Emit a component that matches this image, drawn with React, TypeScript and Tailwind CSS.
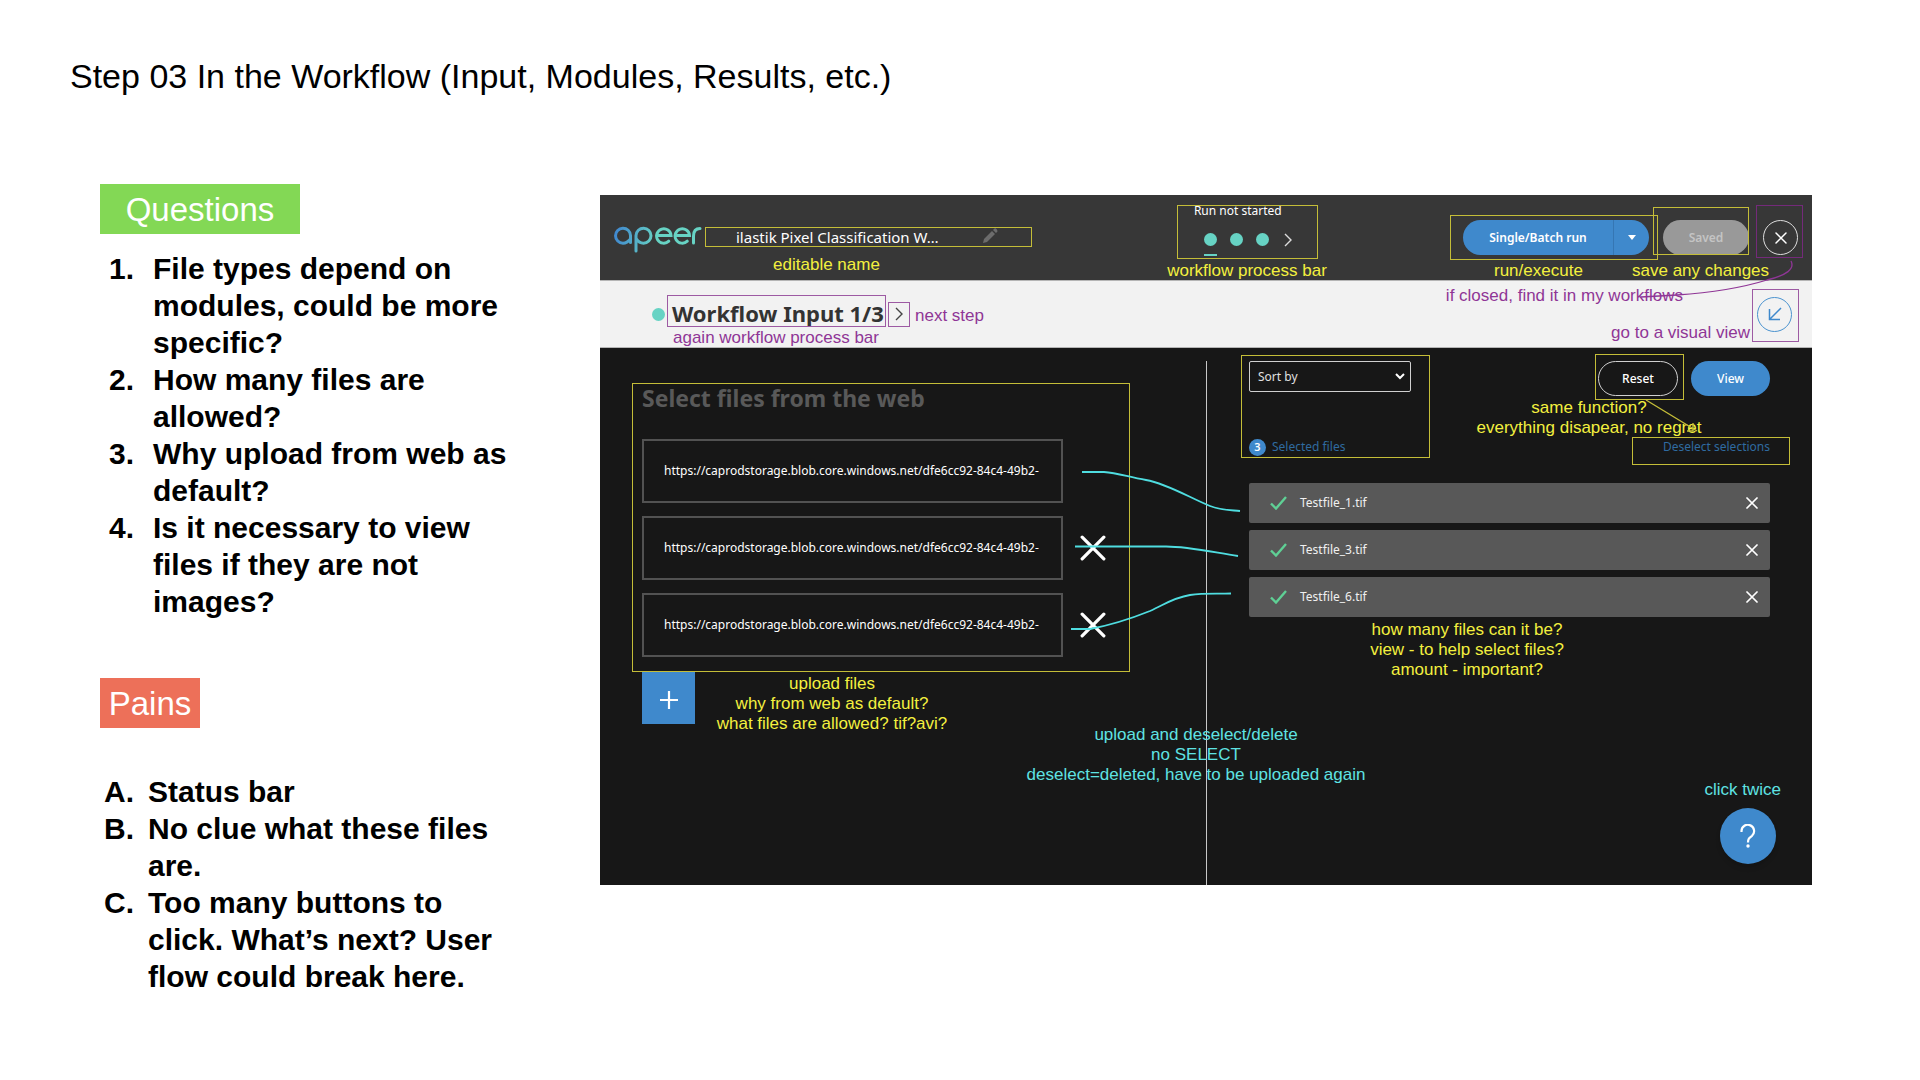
import type { ReactNode } from "react";
import clsx from "clsx";

const fileUrl = "https://caprodstorage.blob.core.windows.net/dfe6cc92-84c4-49b2-";

function Mark({ className }: { className: string }) {
  return <div aria-hidden="true" className={clsx("pointer-events-none absolute border", className)} />;
}

function Note({ className, children }: { className: string; children: ReactNode }) {
  return (
    <p
      className={clsx(
        "pointer-events-none absolute text-center font-['Liberation_Sans',sans-serif] text-[17px] leading-5 whitespace-nowrap",
        className,
      )}
    >
      {children}
    </p>
  );
}

function Cross({ className }: { className: string }) {
  return (
    <svg viewBox="0 0 24 24" className={className} fill="none" stroke="currentColor" strokeLinecap="round">
      <path d="M2 2 22 22M22 2 2 22" />
    </svg>
  );
}

function Chevron() {
  return (
    <svg viewBox="0 0 8 14" className="h-3.5 w-2" fill="none" stroke="currentColor" strokeWidth="1.4">
      <path d="M1 1 7 7 1 13" />
    </svg>
  );
}

function Logo() {
  return (
    <svg viewBox="0 0 88 27" className="mt-1 h-[27px] w-[88px] shrink-0" fill="none" strokeWidth="3" strokeLinecap="round" role="img" aria-label="apeer">
      <defs>
        <linearGradient id="brand" gradientUnits="userSpaceOnUse" x1="0" y1="6" x2="42" y2="14">
          <stop offset="0" stopColor="#3f86cf" />
          <stop offset="1" stopColor="#67d3c4" />
        </linearGradient>
      </defs>
      <g stroke="url(#brand)">
        <path d="M16.500 16.500V9.500A7.500 7.500 0 1 0 9 17.200C12 17.200 14 16 16.500 13" />
        <path d="M22 25V9.500A7.500 7.500 0 1 1 29.500 17.200C26.500 17.200 24 15.500 22.500 13" />
      </g>
      <g stroke="#67d3c4">
        <path d="M42.500 9.500H57A7.200 7.200 0 1 0 54.800 15.200" />
        <path d="M61 9.500H75.500A7.200 7.200 0 1 0 73.300 15.200" />
        <path d="M79.500 17V10Q79.500 2.500 86 2.500" />
      </g>
    </svg>
  );
}

function TopBar() {
  return (
    <header className="flex h-[85px] items-center bg-[#373737] text-white">
      <div className="flex basis-[49%] items-center pl-3.5">
        <Logo />
        <input
          aria-label="Workflow name"
          defaultValue="ilastik Pixel Classification W…"
          className="ml-[34px] w-[232px] bg-transparent pb-0.5 text-[15px] leading-5 outline-none"
        />
        <button aria-label="Edit name" className="ml-3.5 pb-1 text-[#6c6c6c]">
          <svg viewBox="0 0 16 16" className="size-4" fill="currentColor">
            <path d="M1 15 2 11 10 3 13 6 5 14ZM11 2 12.500 .5Q13.500 0 14.500 1T15.500 3.500L14 5Z" />
          </svg>
        </button>
      </div>
      <div className="flex flex-col self-start pt-2">
        <span className="text-[12px] leading-4">Run not started</span>
        <div className="mt-3.5 ml-2.5 flex h-[13px] items-center gap-[13px]">
          <span className="size-[13px] rounded-full bg-[#67d3c4]" />
          <span className="size-[13px] rounded-full bg-[#67d3c4]" />
          <span className="size-[13px] rounded-full bg-[#67d3c4]" />
          <button aria-label="Next stage" className="ml-0.5 text-[#ddd]">
            <Chevron />
          </button>
        </div>
        <span className="mt-2 ml-2.5 h-0.5 w-[13px] bg-[#67d3c4]" />
      </div>
      <div className="ml-auto flex items-center pr-3.5">
        <div className="flex h-[35px] overflow-hidden rounded-full bg-[#3f89cc]">
          <button className="w-[150px] text-[12px] font-semibold">Single/Batch run</button>
          <button aria-label="Run options" className="flex w-9 items-center justify-center border-l border-[#3576b3]">
            <svg viewBox="0 0 8 5" className="h-[5px] w-2" fill="currentColor">
              <path d="M0 0H8L4 5Z" />
            </svg>
          </button>
        </div>
        <button className="ml-3.5 h-[35px] w-[86px] rounded-full bg-[#999] text-[12px] font-semibold text-[#c4c4c4]">Saved</button>
        <button aria-label="Close" className="ml-3.5 flex size-[35px] items-center justify-center rounded-full border border-[#ddd]">
          <Cross className="size-3 stroke-[3]" />
        </button>
      </div>
    </header>
  );
}

function StepBar() {
  return (
    <div className="flex h-[68px] items-center border-y border-[#b5b5b5] bg-[#f2f2f2] pr-5 pl-[52px]">
      <span className="size-[13px] rounded-full bg-[#67d3c4]" />
      <h2 className="ml-[7px] pb-0.5 text-[22px] font-bold whitespace-nowrap text-[#333] lg:w-[223px]">Workflow Input 1/3</h2>
      <button aria-label="Next step" className="text-[#444]">
        <Chevron />
      </button>
      <button aria-label="Visual view" className="ml-auto flex size-[35px] items-center justify-center rounded-full border border-[#4b93cf] text-[#3f89cc]">
        <svg viewBox="0 0 14 14" className="size-3.5" fill="none" stroke="currentColor" strokeWidth="1.5">
          <path d="M13 1 2 12M1.500 2V12.500H12" />
        </svg>
      </button>
    </div>
  );
}

function WebFiles() {
  return (
    <section className="w-1/2 pt-[34px] pl-[42px]">
      <h3 className="text-[23px] leading-8 font-bold text-[#595959]">Select files from the web</h3>
      <ul className="mt-[25px] flex flex-col gap-[13px]">
        {[1, 2, 3].map((n) => (
          <li key={n} className="flex items-center">
            <div className="h-16 w-[421px] border-2 border-[#525252] px-5 pb-0.5">
              <input
                aria-label={`File address ${n}`}
                defaultValue={fileUrl}
                className="h-full w-full bg-transparent text-[12px] text-white outline-none"
              />
            </div>
            {n > 1 && (
              <button aria-label={`Remove address ${n}`} className="ml-[17px] text-white">
                <Cross className="size-[26px] stroke-[3]" />
              </button>
            )}
          </li>
        ))}
      </ul>
      <button aria-label="Add address" className="mt-3.5 flex size-[53px] items-center justify-center bg-[#3f89cc] text-white">
        <svg viewBox="0 0 18 18" className="mt-1 size-[18px]" fill="none" stroke="currentColor" strokeWidth="2.2">
          <path d="M9 0V18M0 9H18" />
        </svg>
      </button>
    </section>
  );
}

function SelectedFiles() {
  return (
    <section className="mt-[13px] w-1/2 border-l border-[#c8c8c8] pr-[42px] pl-[42px]">
      <div className="flex items-start">
        <div className="relative w-[162px]">
          <select aria-label="Sort by" className="h-[31px] w-full appearance-none rounded-xs border border-[#d0d0d0] bg-[#171717] pl-2 text-[12px] text-[#e0e0e0]">
            <option>Sort by</option>
          </select>
          <svg viewBox="0 0 10 7" className="pointer-events-none absolute top-3 right-1.5 h-[7px] w-2.5" fill="none" stroke="#fff" strokeWidth="2">
            <path d="M1 1 5 5 9 1" />
          </svg>
        </div>
        <button className="ml-auto h-[35px] w-20 rounded-full border border-[#d0d0d0] text-[12px] font-medium text-white">Reset</button>
        <button className="ml-[13px] h-[35px] w-[79px] rounded-full bg-[#3f89cc] text-[12px] font-medium text-white">View</button>
      </div>
      <div className="mt-[41px] flex items-center text-[12px] leading-5 text-[#2f6ba0]">
        <span className="flex size-[17px] items-center justify-center rounded-full bg-[#3f89cc] text-[11px] font-semibold text-white">3</span>
        <span className="ml-1.5">Selected files</span>
        <button className="ml-auto">Deselect selections</button>
      </div>
      <ul className="mt-[26px] flex flex-col gap-[7px]">
        {["Testfile_1.tif", "Testfile_3.tif", "Testfile_6.tif"].map((name) => (
          <li key={name} className="flex h-10 items-center rounded-xs bg-[#585858] pr-3 pl-[21px] text-[12px] text-[#f0f0f0]">
            <svg viewBox="0 0 17 14" className="h-3.5 w-[17px]" fill="none" stroke="#5fd095" strokeWidth="2.4">
              <path d="M1 7.500 6 12.500 16 1" />
            </svg>
            <span className="ml-[13px]">{name}</span>
            <button aria-label={`Remove ${name}`} className="ml-auto text-white">
              <Cross className="size-3 stroke-[3.500]" />
            </button>
          </li>
        ))}
      </ul>
    </section>
  );
}

function Annotations() {
  const yellow = "text-[#f3f03f]";
  const purple = "text-[#8f3696]";
  const cyan = "text-[#5fe3e3]";
  return (
    <>
      <Mark className="top-8 left-[105px] h-5 w-[327px] border-[#c4bd38]" />
      <Note className={clsx("top-[60px] left-[105px] w-[243px]", yellow)}>editable name</Note>
      <Mark className="top-[10px] left-[calc(50%-29px)] h-[54px] w-[141px] border-[#c4bd38]" />
      <Note className={clsx("top-[66px] left-[calc(50%-39px)] w-[160px]", yellow)}>workflow process bar</Note>
      <Mark className="top-5 right-[154px] h-[45px] w-[208px] border-[#c4bd38]" />
      <Note className={clsx("top-[66px] right-[230px] w-[88px]", yellow)}>run/execute</Note>
      <Mark className="top-3 right-[63px] h-12 w-24 border-[#c4bd38]" />
      <Note className={clsx("top-[66px] right-11 w-[136px]", yellow)}>save any changes</Note>
      <Mark className="top-2.5 right-[9px] h-[53px] w-[47px] border-[#742a7a]" />

      <Mark className="top-[100px] left-[67px] h-8 w-[219px] border-[#9d5aa3]" />
      <Note className={clsx("top-[133px] left-[72px] w-[208px]", purple)}>again workflow process bar</Note>
      <Mark className="top-[107px] left-[288px] h-[25px] w-[22px] border-[#9d5aa3]" />
      <Note className={clsx("top-[111px] left-[315px]", purple)}>next step</Note>
      <Note className={clsx("top-[91px] right-[129px]", purple)}>if closed, find it in my workflows</Note>
      <Note className={clsx("top-[128px] right-[62px]", purple)}>go to a visual view</Note>
      <Mark className="top-[94px] right-[13px] h-[53px] w-[47px] border-[#9d5aa3]" />
      <svg viewBox="0 0 160 40" className="pointer-events-none absolute top-[65px] right-[15px] h-10 w-40" fill="none" stroke="#8f3696" strokeWidth="1.3">
        <path d="M154 1C158 9 150 15 130 20C104 28 70 33 40 35L4 37" />
      </svg>

      <Mark className="top-[188px] left-8 h-[289px] w-[498px] border-[#c4bd38]" />
      <Note className={clsx("top-[479px] left-[112px] w-[240px]", yellow)}>
        upload files
        <br />
        why from web as default?
        <br />
        what files are allowed? tif?avi?
      </Note>
      <svg viewBox="0 0 180 170" className="pointer-events-none absolute top-[270px] left-[calc(50%-140px)] h-[170px] w-[180px]" fill="none" stroke="#4fdde0" strokeWidth="1.8">
        <path d="M16 7H38C52 8 62 12 80 15C102 19 124 33 144 41C154 45 164 45 174 46" />
        <path d="M9 81.500H100C122 81.500 146 87 172 91" />
        <path d="M5 164H24C40 161 64 154 84 146C98 140 106 133 124 130C138 128 150 129 165 128.500" />
      </svg>
      <Note className={clsx("top-[530px] left-[calc(50%-10px)] -translate-x-1/2", cyan)}>
        upload and deselect/delete
        <br />
        no SELECT
        <br />
        deselect=deleted, have to be uploaded again
      </Note>

      <Mark className="top-40 right-[382px] h-[103px] w-[189px] border-[#c4bd38]" />
      <Mark className="top-[159px] right-32 h-[46px] w-[89px] border-[#c4bd38]" />
      <Note className={clsx("top-[203px] right-[109px] w-[228px]", yellow)}>
        same function?
        <br />
        everything disapear, no regret
      </Note>
      <svg viewBox="0 0 54 34" className="pointer-events-none absolute top-[204px] right-[113px] h-[34px] w-[54px]" fill="none" stroke="#c4bd38" strokeWidth="1.4">
        <path d="M1 1 52 32M48 24V32H42" />
      </svg>
      <Mark className="top-[242px] right-[22px] h-7 w-[158px] border-[#c4bd38]" />
      <Note className={clsx("top-[425px] right-[245px] w-[200px]", yellow)}>
        how many files can it be?
        <br />
        view - to help select files?
        <br />
        amount - important?
      </Note>
      <Note className={clsx("right-[31px] bottom-[85px]", cyan)}>click twice</Note>
    </>
  );
}

function HelpButton() {
  return (
    <button aria-label="Help" className="absolute right-9 bottom-[21px] flex size-14 items-center justify-center rounded-full bg-[#3f89cc] text-white shadow-md">
      <svg viewBox="0 0 16 24" className="h-6 w-4" fill="none" stroke="currentColor" strokeWidth="2.2">
        <path d="M1.500 8V7A6.300 6.300 0 1 1 12 11.800C9 14 8 15 8 18.500" />
        <circle cx="8" cy="22" r="1.700" fill="currentColor" stroke="none" />
      </svg>
    </button>
  );
}

function Workflow() {
  return (
    <article className="relative mt-[11px] min-w-0 flex-1 bg-[#171717] font-['Noto_Sans',sans-serif]">
      <TopBar />
      <StepBar />
      <div className="flex min-h-[537px]">
        <WebFiles />
        <SelectedFiles />
      </div>
      <HelpButton />
      <Annotations />
    </article>
  );
}

const questions = [
  "File types depend on modules, could be more specific?",
  "How many files are allowed?",
  "Why upload from web as default?",
  "Is it necessary to view files if they are not images?",
];

const pains = [
  "Status bar",
  "No clue what these files are.",
  "Too many buttons to click. What’s next? User flow could break here.",
];

export default function App() {
  return (
    <main className="min-h-screen bg-white pb-10 font-['Liberation_Sans',sans-serif] text-black">
      <h1 className="pt-14 pl-[70px] text-[34px] leading-10">Step 03 In the Workflow (Input, Modules, Results, etc.)</h1>
      <div className="mt-22 flex items-start gap-20 pr-27 pl-25">
        <aside className="w-[420px] shrink-0">
          <h2 className="flex h-[50px] w-[200px] items-center justify-center bg-[#83d855] pt-0.5 text-[33px] text-white">Questions</h2>
          <ol className="mt-4 pr-2 pl-[9px] text-[30px] leading-[37px] font-bold">
            {questions.map((text, i) => (
              <li key={text} className="flex">
                <span className="w-11 shrink-0">{i + 1}.</span>
                <span>{text}</span>
              </li>
            ))}
          </ol>
          <h2 className="mt-[58px] flex h-[50px] w-[100px] items-center justify-center bg-[#ed7059] pt-0.5 text-[33px] text-white">Pains</h2>
          <ol className="mt-[45px] pr-5 pl-1 text-[30px] leading-[37px] font-bold">
            {pains.map((text, i) => (
              <li key={text} className="flex">
                <span className="w-11 shrink-0">{"ABC"[i]}.</span>
                <span>{text}</span>
              </li>
            ))}
          </ol>
        </aside>
        <Workflow />
      </div>
    </main>
  );
}
